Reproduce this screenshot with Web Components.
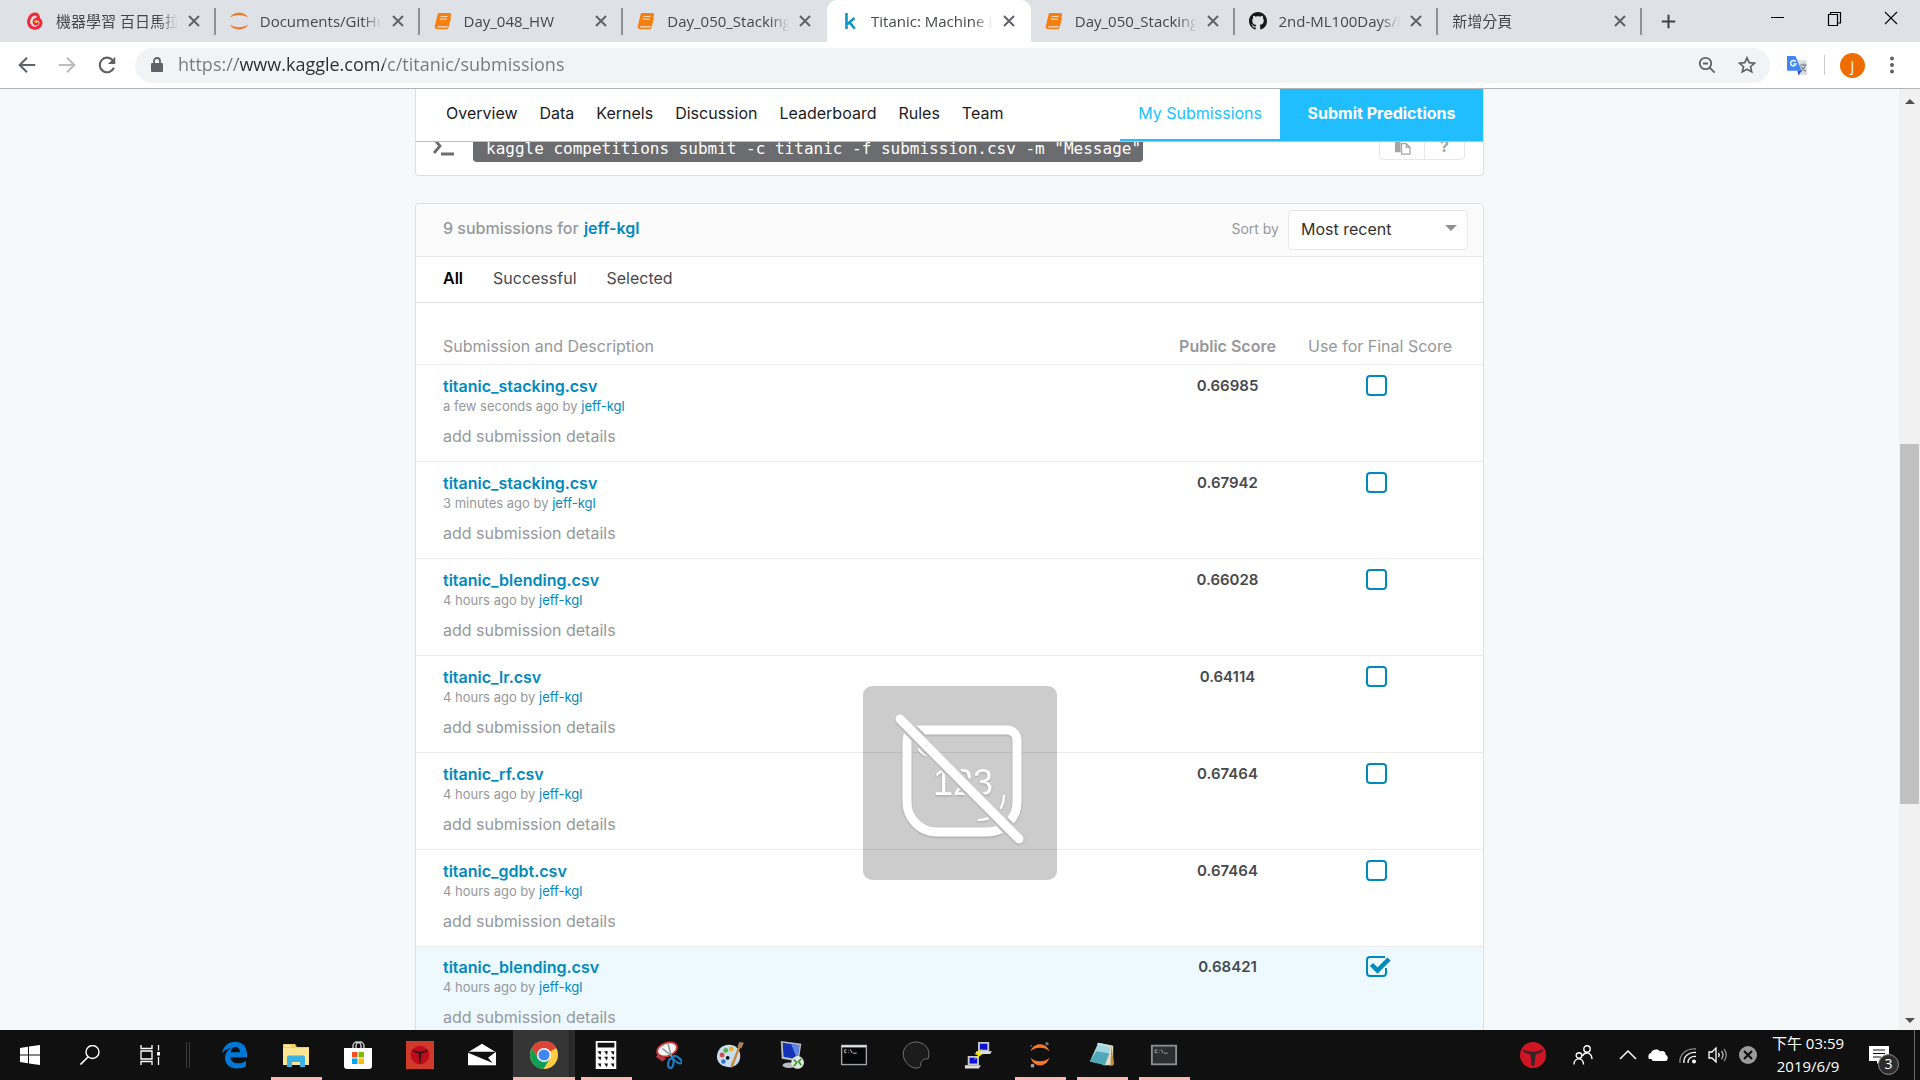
<!DOCTYPE html>
<html lang="zh-Hant">
<head>
<meta charset="utf-8">
<title>Titanic: Machine Learning from Disaster | Kaggle</title>
<style>
  html, body { margin: 0; height: 100%; }
  body {
    display: flex; flex-direction: column; overflow: hidden;
    --ui: "Open Sans", "Noto Sans CJK TC", sans-serif;
    --site: Inter, "Liberation Sans", sans-serif;
    --link: #008abc; --blue: #20beff; --line: #dedfe0;
    font-family: var(--site); font-size: 16px; line-height: 20px; color: #47494d;
  }
  page-viewport { flex: 1; min-height: 0; }
</style>
</head>
<body>
<tab-strip>
  <browser-tab icon="gupao">機器學習 百日馬拉松</browser-tab>
  <browser-tab icon="jupyter">Documents/GitHub/</browser-tab>
  <browser-tab icon="book">Day_048_HW</browser-tab>
  <browser-tab icon="book" noline>Day_050_Stacking_HW</browser-tab>
  <browser-tab icon="kaggle" active>Titanic: Machine Learning</browser-tab>
  <browser-tab icon="book">Day_050_Stacking_HW</browser-tab>
  <browser-tab icon="github">2nd-ML100Days/hw</browser-tab>
  <browser-tab>新增分頁</browser-tab>
</tab-strip>
<browser-toolbar></browser-toolbar>
<page-viewport>
  <competition-nav></competition-nav>
  <command-card>kaggle competitions submit -c titanic -f submission.csv -m "Message"</command-card>
  <submission-list user="jeff-kgl"></submission-list>
</page-viewport>
<task-bar></task-bar>
<ime-badge></ime-badge>

<script>
const ICONS = {
  gupao: '<svg viewBox="0 0 18 18"><path d="M12.500 5.500C11.500 0 6 1.500 3.800 5.500 1 10.500 3.500 16.200 8.500 16.200c5 0 7.500-4 6-7.200-1.300-2.800-5.500-2.600-6.300.2-.5 2 1.300 3.300 3 2.300" fill="none" stroke="#f0263a" stroke-width="3" stroke-linecap="round"/><circle cx="9.800" cy="9.500" r="1.500" fill="#ffc928"/></svg>',
  jupyter: '<svg viewBox="0 0 18 18"><path d="M0 5.500C3-1 15-1 18 5.500 13 2 5 2 0 5.500zM0 12.500c3 6.500 15 6.500 18 0-5 3.500-13 3.500-18 0z" fill="#f37726"/></svg>',
  book: '<svg viewBox="0 0 18 18"><path d="M5 1h10.500c1.200 0 1.800.8 1.500 2l-2.600 9.500c-.3 1.200-1 1.700-2.100 1.700H3.600c-1 0-1 1.300 0 1.300h9.600l2.900-10 .9.700-2.600 9.600c-.3.900-.9 1.400-1.800 1.400H3C1 17.200.3 15.600.9 13.600L3.600 2.500C3.900 1.400 4.300 1 5 1z" fill="#f57f11"/><path d="M6.500 4.500h7M5.800 7.200h7" stroke="#ffd9b0" stroke-width="1.200"/></svg>',
  kaggle: '<svg viewBox="0 0 18 18"><path d="M5.500 1v16M13.500 6l-7 6M8.500 10.200l5.300 6.500" fill="none" stroke="#1295c9" stroke-width="2.600"/></svg>',
  github: '<svg viewBox="0 0 16 16"><path fill="#191717" d="M8 0C3.580 0 0 3.580 0 8c0 3.540 2.290 6.530 5.470 7.590.4.070.55-.17.55-.38 0-.19-.01-.82-.01-1.490-2.010.37-2.530-.49-2.690-.94-.09-.23-.48-.94-.82-1.130-.28-.15-.68-.52-.01-.53.63-.01 1.080.58 1.230.82.72 1.210 1.870.87 2.330.66.070-.52.28-.87.51-1.070-1.780-.2-3.640-.89-3.640-3.950 0-.87.31-1.590.82-2.150-.08-.2-.36-1.020.08-2.120 0 0 .67-.21 2.200.82.64-.18 1.320-.27 2-.27s1.360.09 2 .27c1.530-1.040 2.200-.82 2.200-.82.44 1.100.16 1.920.08 2.120.51.56.82 1.270.82 2.150 0 3.070-1.870 3.750-3.650 3.950.29.25.54.73.54 1.480 0 1.070-.01 1.930-.01 2.200 0 .21.15.46.55.38A8.010 8.010 0 0 0 16 8c0-4.420-3.580-8-8-8z"/></svg>',
  x: '<svg viewBox="0 0 18 18"><path d="M4 4l10 10M14 4L4 14" stroke="#5f6368" stroke-width="2"/></svg>',
  plus: '<svg viewBox="0 0 18 18"><path d="M9 1v16M1 9h16" stroke="#3c4043" stroke-width="2.400"/></svg>',
  min: '<svg viewBox="0 0 18 18"><path d="M3 8.500h13" stroke="#000"/></svg>',
  max: '<svg viewBox="0 0 18 18"><path d="M3.500 5.500h9v11h-9zM5.500 5V3.500h10v10.500H13" fill="none" stroke="#000" stroke-width="1.200"/></svg>',
  close: '<svg viewBox="0 0 18 18"><path d="M3 3l12 12M15 3L3 15" stroke="#000" stroke-width="1.100"/></svg>',
  back: '<svg viewBox="0 0 24 24"><path d="M21 12H5M12 4l-8 8 8 8" fill="none" stroke="#5f6368" stroke-width="2.300"/></svg>',
  fwd: '<svg viewBox="0 0 24 24"><path d="M3 12h16M12 4l8 8-8 8" fill="none" stroke="#babcbe" stroke-width="2.300"/></svg>',
  reload: '<svg viewBox="0 0 24 24"><path d="M19.500 15A8 8 0 1 1 18 6.500" fill="none" stroke="#5f6368" stroke-width="2.300"/><path d="M21 3v8h-8z" fill="#5f6368"/></svg>',
  lock: '<svg viewBox="0 0 14 18"><path d="M2 7h10a1 1 0 0 1 1 1v7a1 1 0 0 1-1 1H2a1 1 0 0 1-1-1V8a1 1 0 0 1 1-1z" fill="#5f6368"/><path d="M4 7V5a3 3 0 0 1 6 0v2" fill="none" stroke="#5f6368" stroke-width="1.800"/></svg>',
  zoomout: '<svg viewBox="0 0 18 18"><circle cx="7.500" cy="7.500" r="5.700" fill="none" stroke="#5f6368" stroke-width="1.800"/><path d="M5 7.500h5M11.700 11.700l5 5" stroke="#5f6368" stroke-width="1.800"/></svg>',
  star: '<svg viewBox="0 0 18 18"><path d="M9 1.800l2.200 4.900 5.300.5-4 3.500 1.200 5.200L9 13.200l-4.700 2.700 1.200-5.200-4-3.500 5.300-.5z" fill="none" stroke="#5f6368" stroke-width="1.700"/></svg>',
  translate: '<svg viewBox="0 0 20 20"><path d="M9 5h10v14h-7z" fill="#dadce0"/><path d="M0 1h8l6 14H1a1 1 0 0 1-1-1z" fill="#4285f4"/><path d="M10 15h4l-3 4.500z" fill="#3543b5"/><path d="M8.300 6.400A2.600 2.600 0 1 0 8.600 8.500H6.200" fill="none" stroke="#fff" stroke-width="1.300"/><path d="M12.500 9.500h6M15.500 8v1.500M17.500 9.500c-.5 2.500-2 4.500-4 6M13.500 11c1 2 2.500 3.500 4.500 4.500" fill="none" stroke="#6b7a80" stroke-width="1"/></svg>',
  dots: '<svg viewBox="0 0 18 18"><g fill="#5f6368"><circle cx="9" cy="2.500" r="2"/><circle cx="9" cy="9" r="2"/><circle cx="9" cy="15.500" r="2"/></g></svg>',
  up: '<svg viewBox="0 0 20 20"><path d="M5 13l5-5 5 5z" fill="#505050"/></svg>',
  down: '<svg viewBox="0 0 20 20"><path d="M5 8l5 5 5-5z" fill="#505050"/></svg>',
  prompt: '<svg viewBox="0 0 24 24"><path d="M2 4l6 7-6 7M9 19h13" fill="none" stroke="#6b6d70" stroke-width="2.800"/></svg>',
  paste: '<svg viewBox="0 0 18 18"><path d="M1 1h10v3H7v11H1z" fill="#a3a5a7"/><path d="M8 6h5l4 4v7H8zM13 6v4h4" fill="none" stroke="#a3a5a7" stroke-width="1.300"/></svg>',
  win: '<svg viewBox="0 0 20 20"><path d="M0 3l8-1.200v7.700H0zM9 1.600L20 0v9.500H9zM0 10.500h8v7.700L0 17zM9 10.500h11V20L9 18.400z" fill="#fff"/></svg>',
  search: '<svg viewBox="0 0 20 20"><circle cx="12.500" cy="7" r="6.500" fill="none" stroke="#fff" stroke-width="1.400"/><path d="M8 12L.5 19.500" stroke="#fff" stroke-width="1.600"/></svg>',
  taskview: '<svg viewBox="0 0 20 20"><path d="M1 0v3.500h11V0M1 20v-3.500h11V20M1 6h11v8H1zM18.500 0v5.500M18.500 12v8" fill="none" stroke="#fff" stroke-width="1.300"/><path d="M17 7h3v3.500h-3z" fill="#fff"/></svg>',
  edge: '<svg viewBox="0 0 28 28"><path d="M2 12.500C3.500 4.500 9 .8 15 .8c7.500 0 12 5.200 12 12.500v3H10.500c.3 4 3.500 6 7.500 6 3 0 5.500-.8 8-2.300v5.500c-2.700 1.300-5.500 2-9 2C9.500 27.500 5 23 5 17c0-4.500 2.500-8 6.500-10-4.500.5-7.500 2.500-9.500 5.500zm8.500-1.200H20C20 8 18.300 6 15.500 6c-2.700 0-4.500 2-5 5.300z" fill="#0078d7"/></svg>',
  folder: '<svg viewBox="0 0 28 28"><path d="M1 3h12l2 3h12v18H1z" fill="#f8cc5c"/><path d="M1 7h26v17H1z" fill="#ffe591"/><path d="M5 26V16a1.500 1.500 0 0 1 1.500-1.500h15A1.500 1.500 0 0 1 23 16v10h-5v-5h-8v5z" fill="#3ab2e6"/><path d="M3 4h6v1.500H3z" fill="#fff"/></svg>',
  store: '<svg viewBox="0 0 28 28"><path d="M9 8V5a4 4 0 0 1 8 0v3M12 8V5a4 4 0 0 1 8 0v3" fill="none" stroke="#ccc" stroke-width="1.400"/><path d="M0 7h28v18a3 3 0 0 1-3 3H3a3 3 0 0 1-3-3z" fill="#fff"/><path d="M8 11h5.500v5.500H8z" fill="#f25022"/><path d="M14.500 11H20v5.500h-5.500z" fill="#7fba00"/><path d="M8 17.500h5.500V23H8z" fill="#00a4ef"/><path d="M14.500 17.500H20V23h-5.500z" fill="#ffb900"/></svg>',
  trend: '<svg viewBox="0 0 30 30"><path d="M0 0h30v30H0z" fill="#cf3a2b"/><circle cx="15" cy="15" r="10" fill="#c20b1a"/><path d="M7 9c5 3 11 3 16 0l-.5 2.500c-2 1-4 1.500-6 2L15.500 24h-1L13.500 13.500c-2-.5-4-1-6-2z" fill="#2a1a1c"/></svg>',
  ball: '<svg viewBox="0 0 30 30"><circle cx="15" cy="15" r="15" fill="#cf1524"/><path d="M3 8.500c8 3.500 16 3.500 24 0l-1.500 3c-3 1.500-5 2-7.500 3l-1.500 13h-3L12 14.500c-3-1-5-1.500-7.500-3z" fill="#33262a"/></svg>',
  mail: '<svg viewBox="0 0 30 30"><path d="M0 12L15 3l15 9v14H0z" fill="#fff"/><path d="M0 11.500h30l-8.500 6.500 5 5.500L0 12.500z" fill="#101010"/></svg>',
  chrome: '<svg viewBox="0 0 28 28"><circle cx="14" cy="14" r="14" fill="#fc4"/><path d="M14 14L1.900 7A14 14 0 0 1 26.100 7z" fill="#db4437"/><path d="M14 7h12.200A14 14 0 0 0 1.900 7l6 10.500z" fill="#db4437"/><path d="M1.900 7A14 14 0 0 0 13.500 28l6.500-10.500-12 0z" fill="#0f9d58"/><circle cx="14" cy="14" r="7" fill="#fff"/><circle cx="14" cy="14" r="5.600" fill="#4285f4"/></svg>',
  calc: '<svg viewBox="0 0 30 30"><path d="M4 0h22v30H4z" fill="#fff"/><path d="M6 2h18v5H6zM6 11h4l-1 4zM13 11h4l-1 4zM20 11h4l-1 4zM6 17h4l-1 4zM13 17h4l-1 4zM20 17h4l-1 4zM6 24h4l-1 4zM13 24h4l-1 4zM20 24h4l-1 4z" fill="#101010"/></svg>',
  snip: '<svg viewBox="0 0 30 30"><ellipse cx="14" cy="9" rx="11" ry="7" transform="rotate(-20 14 9)" fill="#f4f6f8" stroke="#d8383a" stroke-width="2"/><path d="M5 14l8 5-4 3-7-5z" fill="#b23b42"/><path d="M15 3l4 15M9 8l11 9" stroke="#8b9298" stroke-width="1.500"/><ellipse cx="18" cy="24" rx="2.800" ry="5" transform="rotate(10 18 24)" fill="none" stroke="#1b7fc4" stroke-width="2.200"/><ellipse cx="25" cy="20" rx="2.500" ry="5.500" transform="rotate(-52 25 20)" fill="none" stroke="#1b7fc4" stroke-width="2.200"/></svg>',
  paint: '<svg viewBox="0 0 30 30"><path d="M14 4C6 4 1 10 1 17s6 11 13 11c7 0 12-5 12-12S21 4 14 4z" fill="#c5dff0"/><circle cx="12.500" cy="18" r="2" fill="#111"/><circle cx="6.500" cy="15" r="2.600" fill="#d9493f"/><circle cx="10.500" cy="10" r="2.500" fill="#58ad3e"/><circle cx="16.500" cy="8.500" r="2.600" fill="#eeb11e"/><circle cx="8" cy="22" r="2.400" fill="#3c74cb"/><path d="M16 29c-1-3 1-6 2-8l6-15 2 1-6 16c-1 3-2 5-4 6z" fill="#d58334"/><path d="M23 6l2-5 5 1-3 6z" fill="#a9805c"/></svg>',
  rdp: '<svg viewBox="0 0 30 30"><path d="M3 0l22 3-3 19L4 19z" fill="#b5bdc6"/><path d="M5 2l18 2.500-2.500 15L6 17z" fill="#1432b8"/><path d="M14 3l9 1.500-2.500 15z" fill="#5f87e0"/><ellipse cx="12" cy="26" rx="7" ry="3" fill="#b9bec4"/><circle cx="21" cy="23" r="6.800" fill="#e3e6e3"/><path d="M17 20l3 3-3 4M25 19l-3 3 3 4" fill="none" stroke="#3c9b32" stroke-width="1.800"/></svg>',
  cmd: '<svg viewBox="0 0 30 30"><path d="M1 4h28v22H1z" fill="#9da3a8"/><path d="M2.500 7h25v17.500h-25z" fill="#050505"/><path d="M2 4.500h26v2H2z" fill="#dce0e4"/><path d="M7 9.500H5v3h2M9 9.500v.6M9 12v.6M11 9l2 4M14 13h4" fill="none" stroke="#c7c7c7"/></svg>',
  cmd2: '<svg viewBox="0 0 30 30"><path d="M1 4h28v22H1z" fill="#8a8f93"/><path d="M3 6h24v18H3z" fill="#2c2d2e"/><path d="M8 9.500H5.500v3H8M10 9.500v.6M10 12v.6M12 9l2 4M15 13h4" fill="none" stroke="#a5a5a5"/></svg>',
  blob: '<svg viewBox="0 0 30 30"><path d="M28 19C32 7 22 1 15 1S0 7 1.500 16 11 29 15 29c3 0 5-1 5-3 0-4 2-7 8-7z" fill="#1b1b1b" stroke="#777" stroke-width="1"/></svg>',
  putty: '<svg viewBox="0 0 30 30"><path d="M15 1h12v11H15zM4 16h12v10H4z" fill="#c9c9c9"/><path d="M17 3h8v6.500h-8zM6 18h8v6H6z" fill="#0a10d8"/><path d="M13 11h17l-2 3H13zM1 26h17l-2 3.500H1z" fill="#dedede"/><path d="M20 8l-9 6 4 1-5 6 10-7-4-1z" fill="#f6e800"/></svg>',
  jup2: '<svg viewBox="0 0 30 30"><path d="M5 11C8 1 22 1 25 11 20 6 10 6 5 11zM5 18c3 11 17 11 20 0-5 5-15 5-20 0z" fill="#f37726"/><circle cx="22.500" cy="3" r="1.800" fill="#767677"/><circle cx="7" cy="26.500" r="2" fill="#9e9e9e"/><circle cx="5.500" cy="5" r="1" fill="#616262"/></svg>',
  notepad: '<svg viewBox="0 0 30 30"><path d="M11 2l16 3v21L16 26z" fill="#e4ddc6"/><path d="M25 5l3 20-4 2z" fill="#c08c45"/><path d="M11 2l14 3-7 20L2 22z" fill="#a5d8de"/><path d="M9 11l14 2-5 13-16-4z" fill="#4fa9b8"/><path d="M10 3l15 3" stroke="#dfe6e8" stroke-width="2" stroke-dasharray="1 1"/></svg>',
  people: '<svg viewBox="0 0 20 20"><g fill="none" stroke="#fff" stroke-width="1.400"><circle cx="6" cy="10.500" r="2.800"/><path d="M1 19.500c0-7.500 9.500-7.500 9.500 0"/><circle cx="14" cy="4" r="3.200"/><path d="M9.500 11c2-4.500 9-4 9.500 3"/></g></svg>',
  chev: '<svg viewBox="0 0 20 20"><path d="M2 14l8-8 8 8" fill="none" stroke="#fff" stroke-width="1.500"/></svg>',
  cloud: '<svg viewBox="0 0 20 20"><path d="M1 14C-1 10 2 8 3 8c.5-3.500 7-5 9-1.500C16 5 18 8 17.500 10c3 0 3 6 0 6H6C4 16 4 15 3.500 14z" fill="#fff"/></svg>',
  wifi: '<svg viewBox="0 0 20 20"><g fill="none" stroke="#fff" stroke-width="1.300"><path d="M2 18C1 9 9 3 18 4" opacity=".5"/><path d="M6 18c-1-7 5-11 12-10.500"/><path d="M10 18c-.5-4 3-7 8-6.500"/></g><circle cx="16" cy="16.500" r="2" fill="#fff"/></svg>',
  sound: '<svg viewBox="0 0 20 20"><g fill="none" stroke="#fff" stroke-width="1.300"><path d="M1 7h3l4-4v14l-4-4H1z"/><path d="M10.500 8q1.500 2 0 4"/><path d="M13.500 6q3 4 0 8" opacity=".7"/><path d="M16 4q4.500 6 0 12" opacity=".5"/></g></svg>',
  xball: '<svg viewBox="0 0 20 20"><circle cx="10" cy="10" r="9" fill="#9b9b9b"/><path d="M6 6l8 8M14 6l-8 8" stroke="#101010" stroke-width="2.200"/></svg>',
  note: '<svg viewBox="0 0 20 20"><path d="M0 1h20v15h-9l-3 3v-3H0z" fill="#fff"/><path d="M4 5h12M4 8.500h12M4 12h8" stroke="#101010"/></svg>',
  check: '<svg viewBox="0 0 28 21"><path d="M19 1H4a3 3 0 0 0-3 3v13a3 3 0 0 0 3 3h13a3 3 0 0 0 3-3v-5" fill="none" stroke="#008abc" stroke-width="2"/><path d="M5.500 8.500l6 6L23 3" fill="none" stroke="#008abc" stroke-width="4.500"/></svg>'
};
const BASE = `<style>
  :host { display: block; box-sizing: border-box; }
  *, *::before, *::after { box-sizing: border-box; }
  button, input, select { font: inherit; color: inherit; margin: 0; padding: 0; border: 0; background: none; }
  a { color: inherit; text-decoration: none; }
  svg { display: block; }
</style>`;
function define(name, render) {
  customElements.define(name, class extends HTMLElement {
    connectedCallback() {
      if (!this.shadowRoot) this.attachShadow({ mode: "open" }).innerHTML = BASE + render(this);
    }
  });
}

define("ui-icon", el => `<style>
  :host { flex: none; width: var(--w, 18px); }
  svg { width: 100%; height: auto; }
</style>${ICONS[el.getAttribute("name")]}`);

define("browser-tab", el => `<style>
  :host { flex: 1; min-width: 0; position: relative; font: 15px/20px var(--ui); color: #45484c; }
  .tab { display: flex; align-items: center; height: 42px; padding: 0 11px 0 14px; border-right: 2px solid #8f9296; border-image: linear-gradient(transparent 20%, #8f9296 20% 81%, transparent 81%) 1; }
  :host([active]) .tab { background: #fff; border: 0; padding-right: 13px; border-radius: 10px 10px 0 0; }
  :host([noline]) .tab { border-image: none; border-color: transparent; }
  ui-icon { margin-right: 12px; }
  .title { flex: 1; min-width: 0; overflow: hidden; white-space: nowrap; margin-right: 7px; -webkit-mask-image: linear-gradient(90deg, #000 84%, transparent); mask-image: linear-gradient(90deg, #000 84%, transparent); }
  button ui-icon { margin: 0; }
</style><div class="tab">${el.hasAttribute("icon") ? `<ui-icon name="${el.getAttribute("icon")}"></ui-icon>` : ""}
<span class="title"><slot></slot></span><button aria-label="Close tab"><ui-icon name="x"></ui-icon></button></div>`);

define("tab-strip", () => `<style>
  :host { display: flex; justify-content: space-between; background: #dee1e6; height: 42px; padding-left: 12px; }
  .tabs { display: flex; flex: 0 1 1630px; min-width: 0; }
  .new { width: 53px; display: grid; place-items: center; --w: 15px; }
  .win { display: flex; margin: 0 1px 0 auto; }
  .win button { width: 57px; height: 36px; display: grid; place-items: center; }
</style><div class="tabs"><slot></slot></div><button class="new" aria-label="New tab"><ui-icon name="plus"></ui-icon></button>
<div class="win"><button aria-label="Minimize"><ui-icon name="min"></ui-icon></button><button aria-label="Restore"><ui-icon name="max"></ui-icon></button><button aria-label="Close"><ui-icon name="close"></ui-icon></button></div>`);

define("browser-toolbar", () => `<style>
  :host { display: flex; align-items: center; height: 47px; background: #fff; border-bottom: 1px solid #b3b4b6; padding: 0 19px 0 7px; }
  .nav { display: grid; place-items: center; width: 40px; height: 36px; --w: 22px; }
  .box { flex: 1; display: flex; align-items: center; height: 35px; margin: 0 12px 0 8px; padding: 0 15px; border-radius: 18px; background: #f1f3f4; --w: 14px; }
  input { flex: 1; min-width: 0; margin-left: 14px; height: 30px; padding-bottom: 2px; outline: 0; font: 18px/28px var(--ui);
    background: linear-gradient(90deg, #75797e 60px, #2b2d30 60px 206px, #75797e 206px); -webkit-background-clip: text; background-clip: text; -webkit-text-fill-color: transparent; }
  .act { display: grid; place-items: center; width: 40px; --w: 18px; }
  .act:last-child { margin-right: -12px; }
  .rule { width: 1px; height: 20px; background: #c8cacc; margin: 0 15px 0 16px; }
  .me { width: 25px; height: 25px; border-radius: 50%; background: #ef6c00; color: #fff; font: 15px/22px var(--ui); text-align: center; }
  .tr { --w: 21px; margin-left: 5px; } .menu { margin-left: 18px; }
</style>
<button class="nav" aria-label="Back"><ui-icon name="back"></ui-icon></button><button class="nav" aria-label="Forward"><ui-icon name="fwd"></ui-icon></button><button class="nav" aria-label="Reload"><ui-icon name="reload"></ui-icon></button>
<div class="box"><ui-icon name="lock"></ui-icon><input aria-label="Address" value="https://www.kaggle.com/c/titanic/submissions">
<button class="act" aria-label="Zoom"><ui-icon name="zoomout"></ui-icon></button><button class="act" aria-label="Bookmark"><ui-icon name="star"></ui-icon></button></div>
<button class="tr" aria-label="Translate"><ui-icon name="translate"></ui-icon></button><span class="rule"></span>
<button class="me">j</button><button class="menu" aria-label="Menu"><ui-icon name="dots"></ui-icon></button>`);

define("page-viewport", () => `<style>
  :host { display: flex; background: #f5f9fa; overflow: hidden; }
  main { flex: 1; min-width: 0; display: flex; flex-direction: column; align-items: center; overflow: hidden; }
  ::slotted(*) { width: 100%; max-width: 1069px; flex: none; }
  .bar { flex: none; width: 21px; background: #f1f1f1; display: flex; flex-direction: column; align-items: center; --w: 20px; padding: 2px 0 0; }
  .track { flex: 1; width: 19px; display: grid; grid-template-rows: 333fr 360fr 206fr; }
  .thumb { grid-row: 2; background: #c1c1c1; }
</style><main><slot></slot></main><div class="bar"><ui-icon name="up"></ui-icon><div class="track"><div class="thumb"></div></div><ui-icon name="down"></ui-icon></div>`);

define("competition-nav", () => `<style>
  :host { background: #fff; border: 1px solid var(--line); border-top: 0; border-bottom: 1px solid #bdbfc0; }
  nav { display: flex; align-items: stretch; padding-left: 30px; gap: 22px; height: 52px; line-height: 48px; color: #1b1c1d; }
  .mine { margin-left: auto; color: var(--blue); padding: 0 18px; border-bottom: 2px solid var(--blue); }
  .submit { margin-left: -22px; width: 203px; background: var(--blue); color: #fff; font-weight: 700; text-align: center; }
</style><nav>${["Overview", "Data", "Kernels", "Discussion", "Leaderboard", "Rules", "Team"].map(t => `<a href="#">${t}</a>`).join("")}
<a href="#" class="mine">My Submissions</a><a href="#" class="submit">Submit Predictions</a></nav>`);

define("command-card", () => `<style>
  :host { display: flex; align-items: flex-end; height: 34px; overflow: hidden; background: #fff; border: 1px solid var(--line); border-top: 0; border-radius: 0 0 4px 4px; padding: 0 18px 13px 16px; }
  .p { --w: 24px; margin-bottom: 3px; }
  code { margin-left: 17px; padding: 0 0 0 13px; width: 670px; background: #6b6c6f; color: #fff; font: 16px/26px "DejaVu Sans Mono", monospace; border-radius: 4px; white-space: nowrap; }
  .tools { display: flex; margin: 0 0 2px auto; height: 28px; border: 1px solid #e6e7e8; border-radius: 4px; color: #a3a5a7; font-weight: 700; }
  .tools button { width: 44px; display: grid; place-items: center; --w: 17px; }
  .tools button + button { width: 40px; border-left: 1px solid #e6e7e8; }
</style><ui-icon class="p" name="prompt"></ui-icon><code><slot></slot></code><div class="tools"><button aria-label="Copy"><ui-icon name="paste"></ui-icon></button><button>?</button></div>`);

const ROWS = [
  ["titanic_stacking.csv", "a few seconds ago", "0.66985"], ["titanic_stacking.csv", "3 minutes ago", "0.67942"],
  ["titanic_blending.csv", "4 hours ago", "0.66028"], ["titanic_lr.csv", "4 hours ago", "0.64114"],
  ["titanic_rf.csv", "4 hours ago", "0.67464"], ["titanic_gdbt.csv", "4 hours ago", "0.67464"],
  ["titanic_blending.csv", "4 hours ago", "0.68421", true]
];
define("submission-list", el => { const user = el.getAttribute("user"); return `<style>
  :host { margin-top: 27px; background: #fff; border: 1px solid var(--line); border-radius: 4px 4px 0 0; }
  header { display: flex; align-items: center; height: 53px; padding: 0 15px 0 27px; background: #fbfbfb; border-bottom: 1px solid #e8e9ea; border-radius: 4px 4px 0 0; }
  h2 { margin: 0 auto 4px 0; font-size: 16px; font-weight: 500; color: #96989b; }
  h2 a { color: var(--link); font-weight: 600; padding-left: 1px; }
  .sort { font-size: 14px; color: #96989b; margin: 0 9px 2px 0; }
  .sel { display: grid; align-items: center; width: 180px; height: 40px; }
  select { grid-area: 1 / 1; appearance: none; width: 100%; height: 100%; padding: 0 0 2px 12px; background: #fff; border: 1px solid #e6e7e8; border-radius: 4px; color: #333; }
  .sel::after { content: ""; grid-area: 1 / 1; justify-self: end; margin: 0 11px 4px 0; border: 6px solid transparent; border-top-color: #8f9193; border-bottom: 0; pointer-events: none; }
  .filters { display: flex; gap: 30px; height: 46px; line-height: 42px; padding-left: 27px; border-bottom: 1px solid #dedfe0; }
  .filters a:first-child { color: #000; font-weight: 600; }
  table { width: 100%; border-collapse: collapse; table-layout: fixed; }
  th { height: 61px; vertical-align: bottom; padding: 0 0 8px; font-weight: 400; color: #96989b; white-space: nowrap; }
  th.b { font-weight: 600; }
  th, td { border-bottom: 1px solid #ebecec; }
  th:first-child, td:first-child { text-align: left; padding-left: 27px; }
  td { height: 97px; padding: 11px 0 0; vertical-align: top; text-align: center; }
  td p { margin: 0; }
  .file { color: var(--link); font-weight: 600; }
  .by { font-size: 13px; color: #96989b; }
  .by a { color: var(--link); }
  .add { color: #96989b; margin-top: 10px; display: block; }
  .score { font-weight: 600; font-size: 15px; }
  .s { width: 131px; } .u { width: 174px; } .e { width: 16px; }
  .pick { padding-top: 10px; }
  .pick label { display: inline-grid; vertical-align: top; width: 28px; height: 21px; }
  input { grid-area: 1 / 1; appearance: none; width: 21px; height: 21px; border: 2px solid var(--link); border-radius: 4px; }
  input:checked { border-color: transparent; }
  label ui-icon { grid-area: 1 / 1; --w: 28px; pointer-events: none; }
  tr.on td { background: #edf9ff; border-top: 1px solid #d8e8f0; padding-top: 10px; }
  tr.on .pick { padding-top: 9px; }
</style>
<header><h2>9 submissions for <a href="#">${user}</a></h2><label for="sort" class="sort">Sort by</label><span class="sel"><select id="sort"><option>Most recent</option></select></span></header>
<div class="filters"><a href="#">All</a><a href="#">Successful</a><a href="#">Selected</a></div>
<table><colgroup><col><col class="s"><col class="u"><col class="e"></colgroup>
<thead><tr><th>Submission and Description</th><th class="b">Public Score</th><th>Use for Final Score</th><th></th></tr></thead>
<tbody>${ROWS.map(([f, t, s, on]) => `<tr${on ? ' class="on"' : ""}><td><a class="file" href="#">${f}</a><p class="by">${t} by <a href="#">${user}</a></p><a class="add" href="#">add submission details</a></td><td class="score">${s}</td><td class="pick"><label><input type="checkbox" aria-label="Use ${f} for final score"${on ? " checked" : ""}>${on ? '<ui-icon name="check"></ui-icon>' : ""}</label></td><td></td></tr>`).join("")}</tbody></table>`; });

define("task-button", el => `<style>
  :host { width: 62px; height: 50px; }
  button { width: 100%; height: 100%; display: grid; place-items: center; --w: 28px; }
  :host([small]) { width: 60px; } :host([small]) button { --w: 20px; }
  :host([open]) button { background: linear-gradient(#ffb7b4, #ffb7b4) center bottom / 51px 3px no-repeat; }
  :host([focused]) button { background: linear-gradient(#ffb7b4, #ffb7b4) bottom / 100% 3px no-repeat, linear-gradient(90deg, #353535 56px, #222 56px 57px, #2b2b2b 57px); }
</style><button aria-label="${el.getAttribute("name")}"><ui-icon name="${el.getAttribute("name")}"></ui-icon></button>`);

define("task-bar", () => `<style>
  :host { display: flex; flex: none; height: 50px; background: #101010; color: #fff; font: 15px/23px var(--ui); }
  .sep { width: 4px; height: 26px; margin: 12px 13px 0 6px; border: solid #3b3b3b; border-width: 0 1px; }
  .tray { margin-left: auto; display: flex; align-items: center; --w: 20px; }
  .tray ui-icon { margin-right: 10px; }
  .ball { --w: 26px; } .tray .ball { margin-right: 27px; } .tray .people { margin-right: 25px; }
  .tray .last { margin: 0 4px 0 0; }
  .clock { width: 92px; text-align: center; }
  .notes { position: relative; width: 60px; height: 50px; display: grid; place-items: center start; padding-left: 15px; }
  .badge { position: absolute; left: 24px; top: 24px; width: 21px; height: 21px; border: 1px solid #8f8f8f; border-radius: 50%; background: #2d2d2d; font-size: 14px; line-height: 18px; text-align: center; }
  .desk { width: 6px; height: 50px; border-left: 1px solid #6b6b6b; }
</style>
<task-button small name="win"></task-button><task-button small name="search"></task-button><task-button small name="taskview"></task-button><span class="sep"></span>
${["edge", "folder:open", "store", "trend", "mail", "chrome:focused", "calc:open", "snip", "paint", "rdp", "cmd", "blob", "putty", "jup2:open", "notepad:open", "cmd2:open"].map(s => { const [n, a = ""] = s.split(":"); return `<task-button name="${n}" ${a}></task-button>`; }).join("")}
<div class="tray"><ui-icon class="ball" name="ball"></ui-icon><ui-icon class="people" name="people"></ui-icon><ui-icon name="chev"></ui-icon><ui-icon name="cloud"></ui-icon><ui-icon name="wifi"></ui-icon><ui-icon name="sound"></ui-icon><ui-icon class="last" name="xball"></ui-icon>
<div class="clock">下午 03:59<br>2019/6/9</div><button class="notes"><ui-icon name="note"></ui-icon><span class="badge">3</span></button><span class="desk"></span></div>`);

define("ime-badge", () => `<style>
  :host { position: fixed; left: calc(50% - 97px); top: 686px; width: 194px; height: 194px; border-radius: 9px; background: rgba(0, 0, 0, .2); pointer-events: none; }
  svg { filter: drop-shadow(0 1px 1px rgba(0, 0, 0, .2)); }
</style><svg width="194" height="194" viewBox="0 0 194 194" fill="none" stroke="#fff" stroke-linecap="round">
<mask id="cut"><path d="M0 0h194v194H0z" fill="#fff" stroke="none"/><path d="M37 33l119 120" stroke="#000" stroke-width="14"/></mask>
<g mask="url(#cut)"><path d="M54 44h90a10 10 0 0 1 10 10v62a30 30 0 0 1-30 30H74a30 30 0 0 1-30-30V54a10 10 0 0 1 10-10z" stroke-width="9"/>
<path d="M141 110q0 6-3 12M116 134q5 0 10-2M56 63q2 4 7 6" stroke-width="2.500"/>
<text x="70" y="109" font-family="Liberation Sans" font-size="36" fill="#fff" stroke="none">123</text></g>
<path d="M37 33l119 120" stroke-width="9"/></svg>`);
</script>
</body>
</html>
